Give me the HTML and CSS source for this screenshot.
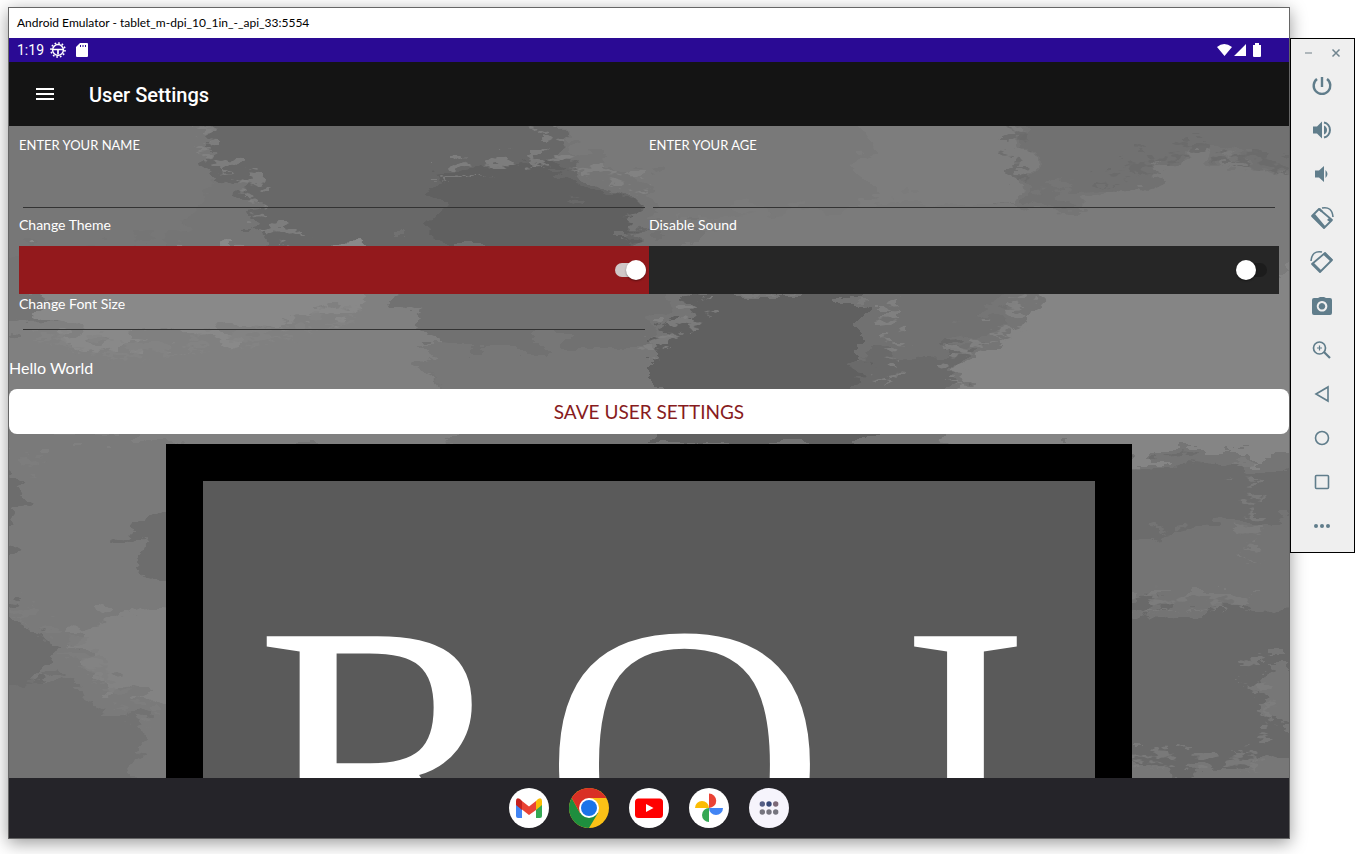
FILE: index.html
```
<!DOCTYPE html>
<html lang="en">
<head>
<meta charset="utf-8">
<title>Android Emulator</title>
<link rel="stylesheet" href="styles.css">
</head>
<body>
<div class="window">
  <header class="titlebar">Android Emulator - tablet_m-dpi_10_1in_-_api_33:5554</header>
  <div class="statusbar">
    <span>1:19</span>
    <svg class="status-icon" viewBox="0 0 16 16"><circle cx="8" cy="8" r="7" fill="none" stroke="#fff" stroke-width="1.6" stroke-dasharray="1.7 1.96"/><circle cx="8" cy="8" r="5.4" fill="none" stroke="#fff" stroke-width="1.5"/><path d="M3 7.500h10M8 7.500v5" fill="none" stroke="#fff" stroke-width="1.700"/></svg>
    <svg class="sd-icon" viewBox="0 0 12 14"><path d="M4 0h7q1 0 1 1v12q0 1-1 1H1q-1 0-1-1V4z" fill="#fff"/><path d="M4.500 2v2M7 2v2M9.500 2v2" stroke="#2a0a94" stroke-width="1"/></svg>
    <svg class="signal-icons" viewBox="0 0 44 14"><path d="M0 4Q7-2 15 4L7.500 13zM29 1v12H17z" fill="#fff"/><path d="M36 2h2V0h4v2h2v11q0 1-1 1h-6q-1 0-1-1z" fill="#fff"/></svg>
  </div>
  <div class="appbar">
    <button class="menu" aria-label="Menu"><svg viewBox="0 0 18 12"><path d="M0 1h18M0 6h18M0 11h18" stroke="#fff" stroke-width="2"/></svg></button>
    <h1>User Settings</h1>
  </div>
  <main class="content">
    <svg class="backdrop" viewBox="0 0 1280 652" preserveAspectRatio="none" aria-hidden="true">
      <defs>
        <filter id="rough" x="-5%" y="-5%" width="110%" height="110%" color-interpolation-filters="sRGB">
          <feTurbulence type="fractalNoise" baseFrequency=".025 .06" numOctaves="4" seed="7" result="n"/>
          <feDisplacementMap in="SourceGraphic" in2="n" scale="60" xChannelSelector="R" yChannelSelector="G"/>
        </filter>
        <filter id="flecks" x="-5%" y="-5%" width="110%" height="110%" color-interpolation-filters="sRGB">
          <feTurbulence type="fractalNoise" baseFrequency=".05 .12" numOctaves="3" seed="21" result="n"/>
          <feColorMatrix in="n" values="0 0 0 0 0 0 0 0 0 0 0 0 0 0 0 20 0 0 0 -10.500" result="mask"/>
          <feDisplacementMap in="SourceGraphic" in2="n" scale="45" xChannelSelector="G" yChannelSelector="R" result="d"/>
          <feComposite in="d" in2="mask" operator="in"/>
        </filter>
      </defs>
      <rect width="1280" height="652" fill="#757575"/>
      <g filter="url(#rough)">
        <path fill="#777" d="M-40-40H190L210 50 150 120-40 130z"/>
        <path fill="#686868" d="M195-40H535L560 40 640 90 620 135H250L240 70 200 40z"/>
        <path fill="#606060" d="M425 50L530 35 570 60 640 90 620 125H430z"/>
        <path fill="#797979" d="M530-40H890L1000 60 940 95H660L640 60 560 20z"/>
        <path fill="#7d7d7d" d="M850-40H1000L1020 30 1010 75 860 80z"/>
        <path fill="#717171" d="M1020-40H1330V45L1260 40 1190 25 1130 65 1020 70z"/>
        <path fill="#7b7b7b" d="M680 90L900 75 1080 80 1180 30 1330 55V160H680z"/>
        <path fill="#808080" d="M-40 200L420 140 440 330H-40z"/>
        <path fill="#898989" d="M30 130L360 125 350 180 240 205 90 220 20 180z"/>
        <path fill="#717171" d="M365 125H690L650 200 630 245 420 215z"/>
        <path fill="#777" d="M410 220H650V275H450z"/>
        <path fill="#606060" d="M710 165H870L870 320H640V215z"/>
        <path fill="#717171" d="M850 145H1010L990 195 930 230 850 240z"/>
        <path fill="#6a6a6a" d="M850 230L960 225 930 275H840z"/>
        <path fill="#858585" d="M1030 145H1330V330H940L950 245 1015 200z"/>
        <path fill="#7a7a7a" d="M-40 310H170V650H-40z"/>
        <path fill="#6d6d6d" d="M-40 345L15 350 0 410-40 430zM115 405L180 390V450L150 455zM-40 480L10 490 55 525 25 560-40 560z"/>
        <path fill="#838383" d="M60 520L100 490 200 470V590L90 550z"/>
        <path fill="#727272" d="M-40 570L40 550 135 600 110 700H-40z"/>
        <path fill="#6c6c6c" d="M1090 330L1260 345 1330 335V400L1250 415H1090z"/>
        <path fill="#747474" d="M1090 415L1220 395 1330 380V480H1090z"/>
        <path fill="#696969" d="M1090 482L1330 480V650L1180 655 1090 630z"/>
        <path fill="#777" d="M1255 540H1330V620L1265 600zM1080 640L1240 645 1330 600V700H1080z"/>
      </g>
      <g filter="url(#flecks)" fill="none" stroke="#858585" stroke-width="18" opacity=".75">
        <path d="M190-10L200 30 245 60 250 100 290 118M530-10L550 35 640 70M430 50L540 35"/>
        <path stroke="#696969" d="M1005-10L1010 60M1090 60L1180 25 1280 45"/>
        <path d="M30 210L110 230 250 215 350 190M1010 170L1005 200 950 230 945 260M880 160L880 240 870 260M700 185L635 230"/>
        <path stroke="#7f7f7f" d="M0 480L60 520 100 560 140 600M1235 340L1245 440M1090 480H1240M1240 530L1260 600 1240 640 1100 635M20 330L15 360"/>
      </g>
    </svg>
    <form class="settings" onsubmit="return false">
      <div class="field"><label class="caps" for="name">ENTER YOUR NAME</label><input class="line tall" id="name" type="text"></div>
      <div class="field"><label class="caps" for="age">ENTER YOUR AGE</label><input class="line tall" id="age" type="text"></div>
      <div class="field"><label for="theme">Change Theme</label><div class="toggle red"><input class="switch" id="theme" type="checkbox" role="switch" checked></div></div>
      <div class="field"><label for="sound">Disable Sound</label><div class="toggle dark"><input class="switch" id="sound" type="checkbox" role="switch"></div></div>
      <div class="field"><label for="size">Change Font Size</label><input class="line" id="size" type="text"></div>
    </form>
    <p class="sample">Hello World</p>
    <button class="save">SAVE USER SETTINGS</button>
    <div class="logo"><span>R</span><span>O</span><span>I</span></div>
  </main>
  <nav class="dock">
    <button aria-label="Gmail"><svg viewBox="0 0 40 40"><circle cx="20" cy="20" r="20" fill="#fff"/><path d="M7 14v14q0 2 2 2h4V17z" fill="#4285f4"/><path d="M33 14v14q0 2-2 2h-4V17z" fill="#34a853"/><path d="M27 13l2-2q4-2 4 2v4l-6 5z" fill="#fbbc04"/><path d="M13 13l7 5.500 7-5.500v9L20 27l-7-5.500z" fill="#ea4335"/><path d="M13 13l-2-2q-4-2-4 2v4l6 5z" fill="#c5221f"/></svg></button>
    <button aria-label="Chrome"><svg viewBox="0 0 40 40"><circle cx="20" cy="20" r="20" fill="#fbc116"/><path d="M2.700 10A20 20 0 0 0 20 40L29 25 20 20 11 25z" fill="#1e8e3e"/><path d="M2.700 10A20 20 0 0 1 37.300 10H20L11 25z" fill="#d93025"/><circle cx="20" cy="20" r="10" fill="#fff"/><circle cx="20" cy="20" r="8" fill="#1a73e8"/></svg></button>
    <button aria-label="YouTube"><svg viewBox="0 0 40 40"><circle cx="20" cy="20" r="20" fill="#fff"/><rect x="6" y="10.500" width="28" height="19.500" rx="3.500" fill="#f00"/><path d="M17 16l7.500 4-7.500 4z" fill="#fff"/></svg></button>
    <button aria-label="Photos"><svg viewBox="0 0 40 40"><circle cx="20" cy="20" r="20" fill="#fff"/><path d="M20 20V5.500a7.200 7.200 0 0 1 0 14.500z" fill="#ea4335"/><path d="M20 20H34a7 7 0 0 1-14 0z" fill="#4285f4"/><path d="M20 20V34a7 7 0 0 1 0-14z" fill="#34a853"/><path d="M20 20H6a7 7 0 0 1 14 0z" fill="#fbbc04"/></svg></button>
    <button aria-label="All apps"><svg viewBox="0 0 40 40"><circle cx="20" cy="20" r="20" fill="#f6f4fc"/><g fill="#75747e"><circle cx="13.300" cy="16" r="2.700" fill="#555e85"/><circle cx="20" cy="16" r="2.700" fill="#374979"/><circle cx="26.700" cy="16" r="2.700" fill="#7c6877"/><circle cx="13.300" cy="24" r="2.700"/><circle cx="20" cy="24" r="2.700"/><circle cx="26.700" cy="24" r="2.700"/></g></svg></button>
  </nav>
</div>
<aside class="tools">
  <div class="tools-head">
    <button aria-label="Minimize"><svg viewBox="0 0 10 10"><path d="M1 5h7" stroke="#9aa5aa" stroke-width="1.500"/></svg></button>
    <button aria-label="Close"><svg viewBox="0 0 10 10"><path d="M1.500 1.500l7 7M8.500 1.500l-7 7" stroke="#71858f" stroke-width="1.500"/></svg></button>
  </div>
  <button aria-label="Power"><svg viewBox="0 0 24 24"><path d="M7 5a8.300 8.300 0 1 0 10 0M12 3v10" fill="none" stroke="#607d8b" stroke-width="2.400"/></svg></button>
  <button aria-label="Volume up"><svg viewBox="0 0 24 24"><path d="M3 8.500v7h4l5 5v-17l-5 5z" fill="#607d8b"/><path d="M14 7.500q3 1.500 3 4.500t-3 4.500z" fill="#607d8b"/><path d="M14 4.500a7.700 7.700 0 0 1 0 15" fill="none" stroke="#607d8b" stroke-width="2"/></svg></button>
  <button aria-label="Volume down"><svg viewBox="0 0 24 24"><path d="M5 8.500v7h4l5 4.500V4L9 8.500zM15.500 8q4 4 0 8z" fill="#607d8b"/></svg></button>
  <button aria-label="Rotate left"><svg viewBox="0 0 24 24"><path d="M9 3L22 14l-8 8L2 10z" fill="none" stroke="#607d8b" stroke-width="1.800" stroke-linejoin="round"/><path d="M2 9.500L13.500 22l2-1.500L5 8zM8 3l2-1 3 3-2 1zM19 12l3 2-2 2-3-2z" fill="#607d8b"/><path d="M12 2q10-2 11 9" fill="none" stroke="#607d8b" stroke-width="1.600"/></svg></button>
  <button aria-label="Rotate right"><svg viewBox="0 0 24 24"><path d="M15 3L2 14l8 8L22 10z" fill="none" stroke="#607d8b" stroke-width="1.800" stroke-linejoin="round"/><path d="M15 2.500l7.500 7-2 2-7.500-7zM3.500 12.500l8 8L10 22l-8-8z" fill="#607d8b"/><path d="M12 2Q2 0 1 11" fill="none" stroke="#607d8b" stroke-width="1.600"/></svg></button>
  <button aria-label="Screenshot"><svg viewBox="0 0 24 24"><path fill-rule="evenodd" d="M8 4l2-1h4l2 1h4q2 0 2 2v13q0 2-2 2H4q-2 0-2-2V6q0-2 2-2zM12 7a5.300 5.300 0 1 0 .1 0zM12 9a3.300 3.300 0 1 1-.1 0z" fill="#607d8b"/></svg></button>
  <button aria-label="Zoom"><svg viewBox="0 0 24 24"><circle cx="9.500" cy="10" r="6" fill="none" stroke="#607d8b" stroke-width="1.700"/><path d="M9.500 7.500v5M7 10h5" stroke="#607d8b" stroke-width="1.200"/><path d="M14 14l6 6" stroke="#607d8b" stroke-width="2.200"/></svg></button>
  <button aria-label="Back"><svg viewBox="0 0 24 24"><path d="M6 12l12-7v14z" fill="none" stroke="#607d8b" stroke-width="1.600"/></svg></button>
  <button aria-label="Home"><svg viewBox="0 0 24 24"><circle cx="12" cy="12" r="6.500" fill="none" stroke="#607d8b" stroke-width="1.600"/></svg></button>
  <button aria-label="Overview"><svg viewBox="0 0 24 24"><rect x="5.500" y="5.500" width="13" height="13" rx="1" fill="none" stroke="#607d8b" stroke-width="1.600"/></svg></button>
  <button aria-label="More"><svg viewBox="0 0 24 24" fill="#607d8b"><circle cx="6" cy="12" r="2"/><circle cx="12" cy="12" r="2"/><circle cx="18" cy="12" r="2"/></svg></button>
</aside>
</body>
</html>
```
FILE: styles.css
```
* { box-sizing: border-box; }
body {
  margin: 0;
  height: 100vh;
  padding: 7px 9px 15px 8px;
  display: flex;
  align-items: flex-start;
  overflow: hidden;
  background: #fff;
  font-family: Lato, "Open Sans", sans-serif;
  color: #fff;
}
button { border: 0; padding: 0; background: none; cursor: pointer; }
svg { display: block; }

.window {
  flex: 1;
  align-self: stretch;
  min-width: 0;
  display: flex;
  flex-direction: column;
  border: 1px solid #666;
  box-shadow: 0 4px 16px rgba(0, 0, 0, .4);
}
.titlebar {
  height: 30px;
  flex: none;
  padding-left: 8px;
  background: #fff;
  color: #000;
  font: 12px/30px Lato, sans-serif;
}
.statusbar {
  height: 24px;
  flex: none;
  display: flex;
  align-items: center;
  padding: 0 28px 0 8px;
  background: #2a0a94;
  font: 14px/24px Roboto, sans-serif;
}
.status-icon { width: 16px; height: 16px; margin-left: 6px; }
.sd-icon { width: 12px; height: 14px; margin-left: 10px; }
.signal-icons { width: 44px; height: 14px; margin-left: auto; }
.appbar {
  height: 64px;
  flex: none;
  display: flex;
  align-items: center;
  gap: 35px;
  padding-left: 27px;
  background: #141414;
}
.menu svg { width: 18px; height: 12px; }
.appbar h1 { margin: 0; font: 500 20px/24px Roboto, sans-serif; padding-top: 2px; }

.content {
  flex: 1;
  min-height: 0;
  position: relative;
  isolation: isolate;
  overflow: hidden;
  background: #757575;
}
.backdrop { position: absolute; inset: 0; width: 100%; height: 100%; z-index: -1; }
.settings {
  display: grid;
  grid-template-columns: 1fr 1fr;
  padding: 9px 10px 0;
}
.field { display: flex; flex-direction: column; }
.field label { font-size: 14px; line-height: 20px; }
.field .caps { font-size: 13px; }
.line {
  margin: 0 4px;
  height: 16px;
  border: 0;
  border-bottom: 1px solid #333;
  border-radius: 0;
  outline: 0;
  background: none;
  color: #fff;
  font: 14px Lato, sans-serif;
}
.line.tall { height: 53px; margin-bottom: 7px; }
.toggle {
  height: 48px;
  margin-top: 11px;
  display: flex;
  align-items: center;
  justify-content: flex-end;
}
.red { background: #93191c; padding-right: 3px; }
.dark { background: #262626; padding-right: 12px; }
.switch {
  appearance: none;
  width: 31px;
  height: 20px;
  margin: 0;
  display: flex;
  position: relative;
}
.switch::after {
  content: "";
  position: absolute;
  inset: 3px 0;
  border-radius: 7px;
  background: #1c1c1c;
}
.switch::before {
  content: "";
  width: 20px;
  height: 20px;
  position: relative;
  z-index: 1;
  border-radius: 50%;
  background: #fff;
  box-shadow: 0 1px 2px rgba(0, 0, 0, .4);
}
.switch:checked { justify-content: flex-end; }
.switch:checked::after { background: #d0c8c8; }
.sample { margin: 28px 0 11px; font-size: 16px; line-height: 20px; }
.save {
  display: block;
  width: 100%;
  height: 45px;
  border-radius: 8px;
  background: #fff;
  color: #871b20;
  font: 19px/45px Lato, sans-serif;
}
.logo {
  width: 75.4%;
  height: 965px;
  margin: 10px auto 0;
  padding: 84px 64px 0 52px;
  display: flex;
  align-items: flex-start;
  justify-content: space-between;
  border: 37px solid #000;
  background: #5a5a5a;
  font: 392px/392px "Liberation Serif", serif;
}
.logo span:nth-child(2) { margin-right: 48px; }

.dock {
  height: 60px;
  flex: none;
  display: flex;
  align-items: center;
  justify-content: center;
  gap: 20px;
  background: #252429;
}
.dock svg { width: 40px; height: 40px; }

.tools {
  width: 65px;
  flex: none;
  margin-top: 31px;
  padding: 0 2px 4px 0;
  display: flex;
  flex-direction: column;
  border: 1px solid #000;
  background: #efefef;
  position: relative;
}
.tools > button { height: 44px; display: grid; place-items: center; }
.tools > button svg { width: 24px; height: 24px; }
.tools-head { height: 25px; padding: 3px 0 0 2px; display: flex; align-items: center; justify-content: center; gap: 17px; }
.tools-head svg { width: 10px; height: 10px; }
```
